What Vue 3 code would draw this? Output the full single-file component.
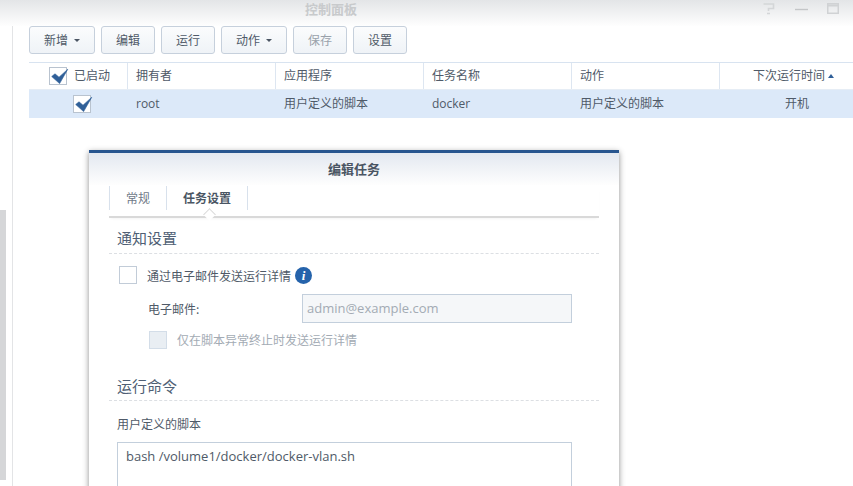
<script setup>
const buttons = [
  { label: '新增', width: 66, caret: true },
  { label: '编辑', width: 54 },
  { label: '运行', width: 54 },
  { label: '动作', width: 66, caret: true },
  { label: '保存', width: 54, disabled: true },
  { label: '设置', width: 54 },
]
const headers = ['拥有者', '应用程序', '任务名称', '动作']
const cells = ['root', '用户定义的脚本', 'docker', '用户定义的脚本']
</script>

<template>
  <div class="page">
    <header class="titlebar">
      <span class="app-title">控制面板</span>
      <div class="win-icons">
        <svg width="14" height="12" viewBox="0 0 14 12"><path d="M1.5 1H11.5V5.5H6.5V8M5 10.5H8" fill="none" stroke="#d4d6d8" stroke-width="1.6"/></svg>
        <svg width="13" height="12" viewBox="0 0 13 12"><path d="M0 6.5H13" stroke="#c4c6c8" stroke-width="1.4"/></svg>
        <svg width="12" height="11" viewBox="0 0 12 11"><rect x=".75" y=".75" width="10.5" height="9.5" fill="none" stroke="#d0d2d4" stroke-width="1.5"/><path d="M0 2.5H12" stroke="#d0d2d4" stroke-width="2"/></svg>
      </div>
    </header>

    <div class="body">
      <aside class="sidebar"><div class="scroll-block"></div></aside>
      <main class="main">
        <div class="toolbar">
          <button v-for="b in buttons" :key="b.label" class="btn" :class="{ disabled: b.disabled }" :style="{ width: b.width + 'px' }">
            {{ b.label }}<i v-if="b.caret" class="caret"></i>
          </button>
        </div>

        <div class="grid">
          <div class="row head">
            <div class="cell first">
              <span class="check big">
                <svg width="20" height="20" viewBox="0 0 20 20"><path d="M1.7 11.5L5 8.8L9 12.2L17.8 4.2L9.6 18.6Z" fill="#2f5f98" stroke="#2f5f98" stroke-width=".6" stroke-linejoin="round"/></svg>
              </span>
              <span>已启动</span>
            </div>
            <div v-for="h in headers" :key="h" class="cell">{{ h }}</div>
            <div class="cell last">下次运行时间<i class="sort"></i></div>
          </div>
          <div class="row data">
            <div class="cell first center">
              <span class="check">
                <svg width="20" height="20" viewBox="0 0 20 20"><path d="M1.7 11.5L5 8.8L9 12.2L17.8 4.2L9.6 18.6Z" fill="#2f5f98" stroke="#2f5f98" stroke-width=".6" stroke-linejoin="round"/></svg>
              </span>
            </div>
            <div v-for="(c, i) in cells" :key="i" class="cell">{{ c }}</div>
            <div class="cell last boot">开机</div>
          </div>
        </div>
      </main>
    </div>

    <section class="dialog">
      <h2 class="dialog-title">编辑任务</h2>
      <div class="content">
        <nav class="tabs">
          <span class="tab plain">常规</span>
          <span class="tab active">任务设置</span>
          <i class="notch"></i>
        </nav>

        <h3 class="section first-section">通知设置</h3>
        <div class="option">
          <span class="box"></span>
          <span class="option-label lower">通过电子邮件发送运行详情</span>
          <span class="info">i</span>
        </div>
        <div class="field">
          <label class="field-label">电子邮件:</label>
          <div class="input">admin@example.com</div>
        </div>
        <div class="option sub">
          <span class="box off"></span>
          <span class="option-label dim">仅在脚本异常终止时发送运行详情</span>
        </div>

        <h3 class="section second-section">运行命令</h3>
        <p class="script-label">用户定义的脚本</p>
        <div class="textarea">bash /volume1/docker/docker-vlan.sh</div>
      </div>
    </section>
  </div>
</template>

<style>
html, body { margin: 0; background: #fff; overflow: hidden; }
</style>

<style scoped>
.page {
  position: relative;
  width: 853px;
  height: 486px;
  overflow: hidden;
  background: #fff;
  color: #4f5a68;
  font: 13px/18px "Open Sans", "Noto Sans CJK SC", sans-serif;
  letter-spacing: 0;
}
.titlebar {
  position: relative;
  height: 26px;
  background: linear-gradient(#e3e5e7, #fefefe);
  display: flex;
  padding-left: 305px;
}
.app-title {
  font: bold 13px/18px "Noto Sans CJK SC", sans-serif;
  color: #c8cacc;
}
.win-icons {
  position: absolute;
  right: 14px;
  top: 3px;
  display: flex;
  gap: 19px;
  align-items: flex-start;
}
.body { display: flex; height: 460px; }
.sidebar {
  width: 12px;
  border-right: 1px solid #e3e4e6;
  box-sizing: content-box;
  flex: none;
  padding-top: 184px;
}
.scroll-block { width: 6px; height: 270px; background: #d5d6d8; }
.main { flex: 1; padding-left: 16px; min-width: 0; }
.toolbar { display: flex; gap: 6px; }
.btn {
  height: 28px;
  padding: 0;
  box-sizing: border-box;
  border: 1px solid #c6d0dc;
  border-radius: 3px;
  background: linear-gradient(#fbfcfd, #eff3f7);
  color: #4f5a68;
  font: 12px/18px "Noto Sans CJK SC", sans-serif;
  display: flex;
  align-items: center;
  justify-content: center;
}
.btn.disabled { color: #9aa2ab; }
.caret {
  width: 0;
  height: 0;
  margin-left: 6px;
  border: 3.5px solid transparent;
  border-top: 3.5px solid #4a5563;
  border-bottom: 0;
}
.grid { margin-top: 8px; }
.row {
  display: grid;
  grid-template-columns: 99px 148px 148px 148px 148px 1fr;
}
.head { height: 28px; border-top: 1px solid #d8e3f0; border-bottom: 1px solid #e6edf5; box-sizing: border-box; }
.data { height: 28px; background: #dce9f9; }
.cell {
  padding-left: 8px;
  display: flex;
  align-items: center;
  box-sizing: border-box;
  white-space: nowrap;
  font-size: 12px;
}
.head .cell { border-right: 1px solid #dde6f1; }
.head .cell:last-child { border-right: 0; }
.first { padding-left: 20px; gap: 7px; }
.first.center { padding-left: 44px; }
.last { padding: 0 19px 0 0; justify-content: flex-end; }
.boot { padding-right: 44px; }
.sort {
  width: 0;
  height: 0;
  margin-left: 3px;
  border: 3px solid transparent;
  border-bottom: 4px solid #2f5f98;
  border-top: 0;
}
.check {
  position: relative;
  width: 18px;
  height: 18px;
  box-sizing: border-box;
  border: 1px solid #b9c3cf;
  background: #fff;
  flex: none;
}
.check svg { position: absolute; left: 0; top: -3px; }
.dialog {
  position: absolute;
  left: 89px;
  top: 150px;
  width: 530px;
  height: 360px;
  background: #fff;
  border-top: 3px solid #27558f;
  box-sizing: border-box;
  box-shadow: 0 2px 6px rgba(0, 0, 0, .45);
}
.dialog-title {
  margin: 0;
  height: 32px;
  background: linear-gradient(#e3e8f0, #fefefe);
  text-align: center;
  font: bold 13px/32px "Noto Sans CJK SC", sans-serif;
  color: #4a5563;
}
.content { padding: 1px 20px 0; }
.tabs {
  position: relative;
  height: 30px;
  display: flex;
  border-bottom: 2px solid #d9d9d9;
  box-shadow: 0 2px 3px -2px rgba(0,0,0,.08);
}
.tab {
  height: 24px;
  border-right: 1px solid #d8e1ec;
  font: 12px/24px "Noto Sans CJK SC", sans-serif;
  text-align: center;
  box-sizing: border-box;
}
.tab.plain { width: 58px; border-left: 1px solid #d8e1ec; color: #6f7a88; }
.tab.active { width: 81px; font-weight: 700; color: #4a5563; }
.notch {
  position: absolute;
  left: 96px;
  bottom: -2px;
  width: 8px;
  height: 8px;
  background: #fff;
  border-left: 1px solid #d9d9d9;
  border-top: 1px solid #d9d9d9;
  transform: translateY(1px) rotate(45deg);
}
.section {
  margin: 0;
  padding-left: 8px;
  border-bottom: 1px dashed #dcdfe3;
  font: 400 15px/22px "Noto Sans CJK SC", sans-serif;
  color: #4f5f75;
  height: 26px;
  box-sizing: content-box;
}
.first-section { margin-top: 9px; }
.second-section { margin-top: 25px; line-height: 24px; }
.option { display: flex; align-items: center; margin: 12px 0 0 10px; height: 18px; }
.box {
  width: 18px;
  height: 18px;
  box-sizing: border-box;
  border: 1px solid #c2ccd8;
  background: #fff;
  flex: none;
}
.box.off { background: #e9eef3; border-color: #d3dde8; }
.option-label { margin-left: 10px; font: 12px/18px "Noto Sans CJK SC", sans-serif; }
.option-label.lower { line-height: 20px; height: 18px; }
.dim { color: #a3abb4; }
.info {
  width: 17px;
  height: 17px;
  margin-left: 4px;
  margin-top: 1px;
  border-radius: 50%;
  background: #2563ab;
  color: #fff;
  font: italic bold 13px/17px "Liberation Serif", serif;
  text-align: center;
}
.field { display: flex; align-items: center; margin: 10px 0 0 39px; }
.field-label { width: 154px; font: 12px/18px "Noto Sans CJK SC", sans-serif; }
.input {
  width: 270px;
  height: 29px;
  box-sizing: border-box;
  border: 1px solid #c3cfdc;
  background: #f5f7f9;
  padding-left: 4px;
  line-height: 27px;
  color: #a3abb4;
}
.sub { margin: 8px 0 0 40px; }
.script-label { margin: 14px 0 0 8px; font: 12px/18px "Noto Sans CJK SC", sans-serif; }
.textarea {
  margin: 9px 0 0 8px;
  width: 455px;
  height: 120px;
  box-sizing: border-box;
  border: 1px solid #c3cfdc;
  padding: 4px 8px;
  color: #4f5a68;
}
</style>
